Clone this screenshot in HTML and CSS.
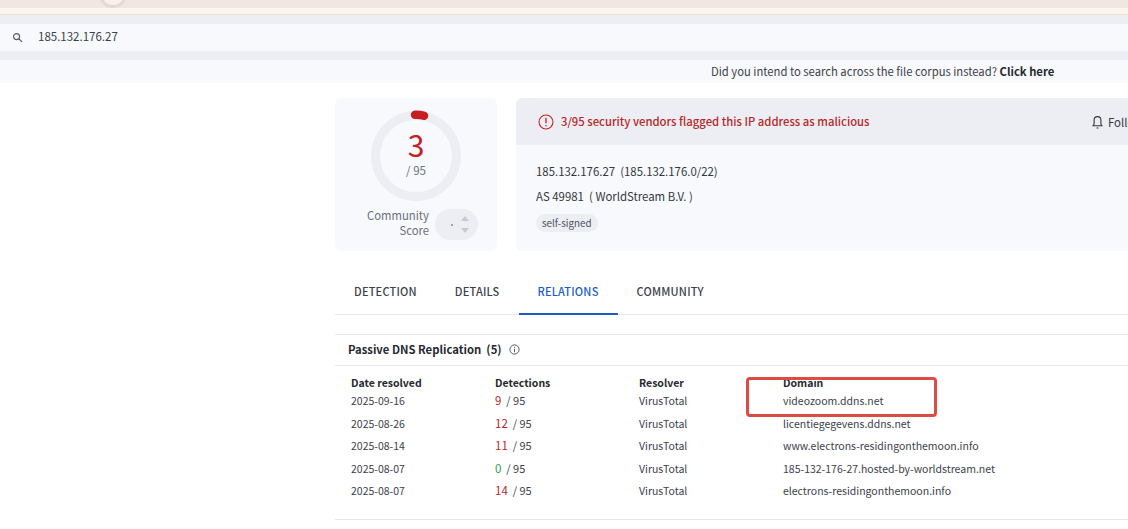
FILE: index.html
```html
<!DOCTYPE html>
<html lang="en">
<head>
    <meta charset="UTF-8">
    <title>185.132.176.27</title>
    <link rel="stylesheet" href="styles.css">
</head>
<body>
    <div class="top-banner">
        <div class="banner-bar"><span class="banner-knob"></span></div>
    </div>

    <div class="search-wrap">
        <div class="search-row">
            <svg class="search-icon" width="11" height="11" viewBox="0 0 12 12" fill="none" stroke="#555b66" stroke-width="1.3">
                <circle cx="5" cy="5" r="3.3"/>
                <path d="M7.6 7.6 L11 10.8"/>
            </svg>
            <span>185.132.176.27</span>
        </div>
    </div>

    <div class="corpus-hint">
        Did you intend to search across the file corpus instead? <b>Click here</b>
    </div>

    <div class="main">
        <div class="summary">
            <div class="score-card">
                <div class="gauge">
                    <svg width="92" height="92" viewBox="0 0 92 92" fill="none">
                        <circle cx="46" cy="46" r="40.5" stroke="#eceef3" stroke-width="9"/>
                        <path d="M45 4.8 Q50 4.6 54 5.8" stroke="#c5201f" stroke-width="8.5" stroke-linecap="round"/>
                    </svg>
                    <div class="gauge-text">
                        <div class="gauge-num">3</div>
                        <div class="gauge-total">/ 95</div>
                    </div>
                </div>
                <div class="community">
                    <div class="community-label">Community<br>Score</div>
                    <div class="community-vote">
                        <span class="vote-dot"></span>
                        <span class="vote-arrows">
                            <span class="arrow-up"></span>
                            <span class="arrow-down"></span>
                        </span>
                    </div>
                </div>
            </div>

            <div class="info-card">
                <div class="info-header">
                    <svg width="16" height="16" viewBox="0 0 16 16" fill="none" stroke="#c5201f" stroke-width="1.1">
                        <circle cx="8" cy="8" r="7"/>
                        <path d="M8 3.8 V9.2" stroke-width="1.3"/>
                        <path d="M8 10.9 V12.2" stroke-width="1.3"/>
                    </svg>
                    <span class="flag-text">3/95 security vendors flagged this IP address as malicious</span>
                    <span class="follow">
                        <svg width="11" height="14" viewBox="0 0 11 14" fill="none" stroke="#33373f" stroke-width="1.1">
                            <path d="M1 10.8 H10 L8.9 9.2 V5 A3.4 3.4 0 0 0 2.1 5 V9.2 Z"/>
                            <path d="M4.5 13 H6.5"/>
                        </svg>
                        Follow
                    </span>
                </div>
                <div class="info-body">
                    <div class="info-line">185.132.176.27&nbsp; (185.132.176.0/22)</div>
                    <div class="info-line">AS 49981 &nbsp;( WorldStream B.V. )</div>
                    <span class="tag">self-signed</span>
                </div>
            </div>
        </div>

        <div class="tabs">
            <div class="tab">DETECTION</div>
            <div class="tab">DETAILS</div>
            <div class="tab active">RELATIONS</div>
            <div class="tab">COMMUNITY</div>
        </div>

        <div class="dns">
            <div class="dns-title">
                Passive DNS Replication &nbsp;(5)
                <svg width="11" height="11" viewBox="0 0 11 11" fill="none" stroke="#444952" stroke-width="0.9">
                    <circle cx="5.5" cy="5.5" r="4.6"/>
                    <path d="M5.5 4.8 V8.2"/>
                    <path d="M5.5 2.9 V3.9"/>
                </svg>
            </div>
            <div class="dns-table">
                <div class="dns-row dns-head">
                    <span>Date resolved</span><span>Detections</span><span>Resolver</span><span>Domain</span>
                </div>
                <div class="dns-row">
                    <span>2025-09-16</span><span class="det"><i>9</i> &nbsp;/ 95</span><span>VirusTotal</span><span>videozoom.ddns.net</span>
                </div>
                <div class="dns-row">
                    <span>2025-08-26</span><span class="det"><i>12</i> &nbsp;/ 95</span><span>VirusTotal</span><span>licentiegegevens.ddns.net</span>
                </div>
                <div class="dns-row">
                    <span>2025-08-14</span><span class="det"><i>11</i> &nbsp;/ 95</span><span>VirusTotal</span><span>www.electrons-residingonthemoon.info</span>
                </div>
                <div class="dns-row">
                    <span>2025-08-07</span><span class="det"><i class="clean">0</i> &nbsp;/ 95</span><span>VirusTotal</span><span>185-132-176-27.hosted-by-worldstream.net</span>
                </div>
                <div class="dns-row">
                    <span>2025-08-07</span><span class="det"><i>14</i> &nbsp;/ 95</span><span>VirusTotal</span><span>electrons-residingonthemoon.info</span>
                </div>
            </div>
        </div>
    </div>

    <div class="annotation"></div>
</body>
</html>
```

FILE: styles.css
```css
html, body {
    height: 529px;
    overflow: hidden;
}
body {
    margin: 0;
    background: white;
    color: #33373f;
    font-family: "Noto Sans CJK SC", "Noto Sans", sans-serif;
    font-size: 11.4px;
    width: 1128px;
    position: relative;
}
.top-banner {
    height: 14px;
    background: #fef5ee;
    border-bottom: 1px solid #eadfd8;
}
.banner-bar {
    height: 8px;
    background: #f1e7e1;
    position: relative;
    overflow: hidden;
}
.banner-knob {
    position: absolute;
    left: 100px;
    top: -14px;
    width: 20px;
    height: 16px;
    border: 3px solid #e3dad4;
    background: #f8f0eb;
    border-radius: 50%;
}
.search-wrap {
    background: #eceef3;
    padding: 9px 0;
}
.search-row {
    height: 27px;
    background: #f8f9fc;
    display: flex;
    align-items: center;
    padding-left: 12px;
    gap: 15px;
    font-size: 11.5px;
    line-height: 23px;
    color: #3b3f47;
}
.search-row span {
    padding-bottom: 2px;
}
.corpus-hint {
    height: 23px;
    line-height: 22px;
    background: #f8f9fc;
    padding-left: 711px;
    font-size: 11.25px;
    color: #3b3f47;
    white-space: nowrap;
}
.corpus-hint b {
    color: #26292f;
}
.main {
    padding: 15px 0 0 335px;
}
.summary {
    display: flex;
    gap: 19px;
    height: 153px;
}
.score-card {
    width: 162px;
    flex: none;
    background: #f8f9fc;
    border-radius: 6px;
    box-sizing: border-box;
    padding-top: 12px;
}
.gauge {
    width: 92px;
    height: 92px;
    margin-left: 35px;
    position: relative;
}
.gauge svg {
    display: block;
}
.gauge-text {
    position: absolute;
    top: 16px;
    left: 0;
    right: 0;
    text-align: center;
}
.gauge-num {
    font-size: 30px;
    line-height: 36px;
    color: #c5201f;
}
.gauge-total {
    font-size: 11.5px;
    line-height: 16px;
    color: #6b7079;
}
.community {
    display: flex;
    align-items: center;
    margin-top: 6px;
    margin-left: 20px;
    gap: 6px;
}
.community-label {
    width: 74px;
    text-align: right;
    font-size: 11.3px;
    line-height: 15px;
    color: #6b7079;
    padding-bottom: 3px;
}
.community-vote {
    width: 43px;
    height: 31px;
    border-radius: 16px;
    background: #eceef3;
    display: flex;
    align-items: center;
    justify-content: flex-end;
    gap: 8px;
    padding-right: 9px;
    box-sizing: border-box;
}
.vote-dot {
    width: 2px;
    height: 2px;
    background: #9ea3ad;
}
.vote-arrows {
    display: flex;
    flex-direction: column;
    gap: 7px;
}
.arrow-up, .arrow-down {
    width: 0;
    height: 0;
    border-left: 4px solid transparent;
    border-right: 4px solid transparent;
}
.arrow-up {
    border-bottom: 5px solid #c6cad2;
}
.arrow-down {
    border-top: 5px solid #c6cad2;
}
.info-card {
    flex: 1;
    background: #f8f9fc;
    border-radius: 6px 0 0 6px;
    overflow: hidden;
}
.info-header {
    height: 47px;
    background: #eceef3;
    display: flex;
    align-items: center;
    padding-left: 22px;
    gap: 7px;
    position: relative;
}
.flag-text {
    color: #b8282a;
    font-size: 11.3px;
    font-weight: 500;
    padding-bottom: 2px;
}
.follow {
    position: absolute;
    left: 576px;
    top: 16px;
    display: flex;
    gap: 5px;
    align-items: center;
    font-size: 11.4px;
    white-space: nowrap;
}
.info-body {
    padding: 17px 20px 0;
}
.info-line {
    line-height: 18px;
    margin-bottom: 7px;
    white-space: nowrap;
}
.tag {
    display: inline-block;
    background: #eceef3;
    border-radius: 9px;
    font-size: 9.8px;
    line-height: 18px;
    padding: 0 6px;
    margin-top: 2px;
    color: #4c5058;
}
.tabs {
    display: flex;
    margin-top: 15px;
    height: 48px;
    border-bottom: 1px solid #e6e8ed;
}
.tab {
    padding: 0 19px;
    line-height: 50px;
    height: 49px;
    box-sizing: border-box;
    font-size: 11px;
    font-weight: 500;
    letter-spacing: 0.2px;
    color: #3d4149;
}
.tab.active {
    color: #1a5bc8;
    border-bottom: 2px solid #1a5bc8;
}
.dns {
    margin-top: 19px;
    border-top: 1px solid #e6e8ed;
    border-bottom: 1px solid #e6e8ed;
    height: 184px;
}
.dns-title {
    height: 31px;
    padding-left: 13px;
    padding-bottom: 2px;
    box-sizing: border-box;
    border-bottom: 1px solid #e6e8ed;
    display: flex;
    align-items: center;
    gap: 7px;
    font-size: 11.3px;
    font-weight: 700;
    color: #26292f;
}
.dns-table {
    padding: 9px 0 0 16px;
}
.dns-row {
    display: grid;
    grid-template-columns: repeat(4, 144px);
    height: 22.5px;
    line-height: 20px;
    font-size: 10.5px;
    white-space: nowrap;
    color: #3d4149;
}
.dns-head {
    height: 16px;
    line-height: 16px;
    font-weight: 700;
    color: #26292f;
}
.det {
    font-size: 11px;
    line-height: 18px;
}
.dns-row i {
    font-style: normal;
    color: #b8282a;
    font-size: 11.5px;
}
.dns-row i.clean {
    color: #1f9d55;
}
.annotation {
    position: absolute;
    left: 746px;
    top: 377px;
    width: 191px;
    height: 40px;
    border: 3px solid #dc4c44;
    border-radius: 4px;
    box-sizing: border-box;
}
```
